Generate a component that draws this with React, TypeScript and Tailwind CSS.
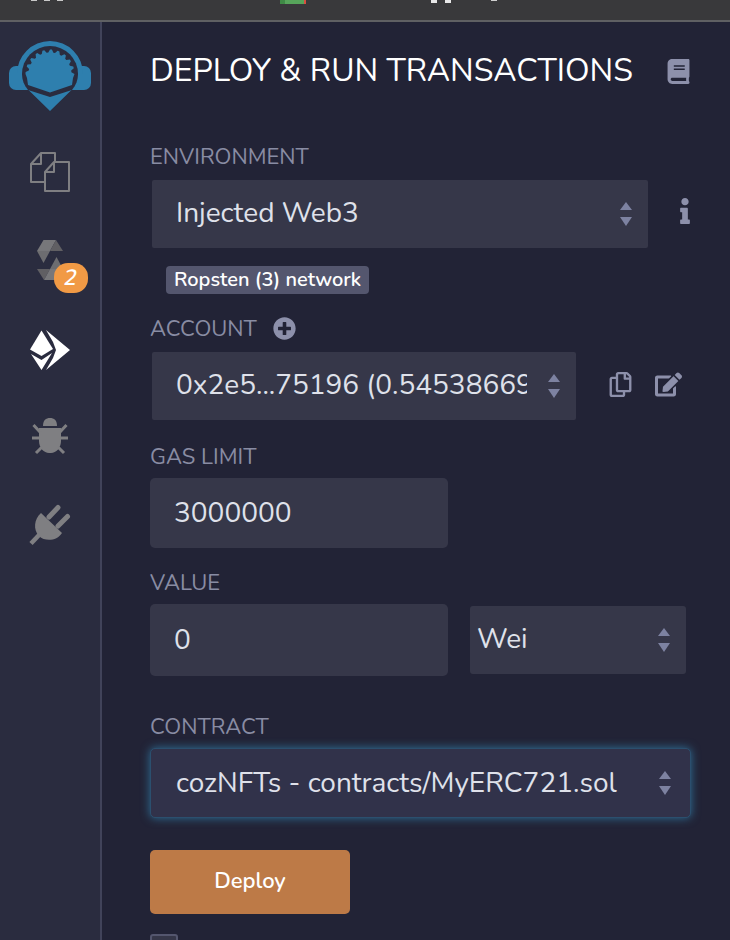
// Remix "Deploy & Run" side panel
import { FaBook, FaEdit, FaInfo, FaPlusCircle, FaRegCopy } from 'react-icons/fa';

const gearPoints = Array.from({ length: 41 }, (_, i) => {
  const a = Math.PI + (i / 40) * Math.PI;
  const r = i % 4 < 2 ? 24.5 : 21.5;
  return `${(50 + r * Math.cos(a)).toFixed(1)},${(74 + r * Math.sin(a)).toFixed(1)}`;
}).join(' ');

function Logo() {
  return (
    <svg width="100" height="80" viewBox="0 36 100 80">
      <rect x="9" y="66" width="20" height="24" rx="7" fill="#2e7fae" />
      <rect x="71" y="66" width="20" height="24" rx="7" fill="#2e7fae" />
      <path d="M17 74A33 33 0 0 1 83 74V90H71.500L50 111L28.500 90H17Z" fill="#2e7fae" />
      <path d="M22 74A28 28 0 0 1 78 74C78 80 76 85 72 90L50 97L28 90C24 85 22 80 22 74Z" fill="#2a2c3f" />
      <polygon points={`${gearPoints} 73,78 72,85 50,92.500 28,85 27,78`} fill="#2e7fae" />
    </svg>
  );
}

function FilesIcon() {
  return (
    <svg width="40" height="40" viewBox="30 152 40 40" fill="none" stroke="#7f7f82" strokeWidth="2" strokeLinejoin="round">
      <path d="M45 182H31V164L41 153H55V162" />
      <path d="M41 153V164H31" />
      <path d="M45 172L54 162H69V191H45Z" />
      <path d="M54 162V172H45" />
    </svg>
  );
}

function SolidityIcon() {
  return (
    <svg width="28" height="40" viewBox="36 240 28 40">
      <polygon points="43.500,240 56,240 50,251 37,251" fill="#77777a" />
      <polygon points="56,240 63,251 50,251" fill="#605f63" />
      <polygon points="37,251 50,251 43.500,263" fill="#6d6d70" />
      <polygon points="56.500,257 63,269 50,269" fill="#6d6d70" />
      <polygon points="37,269 50,269 44,280" fill="#605f63" />
      <polygon points="50,269 63,269 56.500,280 44,280" fill="#77777a" />
    </svg>
  );
}

function EthIcon() {
  return (
    <svg width="40" height="40" viewBox="32 330 40 40" fill="#ffffff">
      <polygon points="43.500,330.500 32,349.500 43.500,356 55,349" />
      <polygon points="33,354 43.500,360 54,353 43.500,370" />
      <polygon points="48,330 72,350 48,370 55,358 58,350 55,342" />
    </svg>
  );
}

function BugIcon() {
  return (
    <svg width="38" height="38" viewBox="31 416 38 38" fill="#7f7f82" stroke="none">
      <path d="M43 425C43 419 46 417 50 417C54 417 57 419 57 425Z" />
      <path d="M39 427H61V429.500H51V452H49V429.500H39Z" />
      <path d="M39 429H49V452C44 452 39 447 39 440Z" />
      <path d="M51 429H61V440C61 447 56 452 51 452Z" />
      <path d="M33.500 424L40 431M66.500 424L60 431M32 437H40M68 437H60M36 452L41.500 446.500M64 452L58.500 446.500" stroke="#7f7f82" strokeWidth="3" fill="none" />
    </svg>
  );
}

function PlugIcon() {
  return (
    <svg width="42" height="42" viewBox="30 503 42 42" fill="#7f7f82">
      <path d="M42 512L63 532C58 540 46 541 40 535C34 529 35 518 42 512Z" />
      <path d="M50 516L59 506.500M59 525L68.500 515.500" stroke="#7f7f82" strokeWidth="5" strokeLinecap="round" fill="none" />
      <path d="M41 533L32 542.500" stroke="#7f7f82" strokeWidth="4.500" fill="none" />
    </svg>
  );
}

function Arrows() {
  return (
    <svg width="12" height="24" viewBox="0 0 12 24" fill="#7d82a1" className="shrink-0">
      <polygon points="6,0 12,8 0,8" />
      <polygon points="0,15 12,15 6,24" />
    </svg>
  );
}

function Label({ children, className = '' }: { children: React.ReactNode; className?: string }) {
  return <div className={`text-[22px] leading-[24px] text-[#898ca3] ${className}`}>{children}</div>;
}

export default function App() {
  return (
    <div className="flex h-[940px] w-[730px] flex-col overflow-hidden bg-[#222336] font-['Nunito','Lato',sans-serif]">
      {/* browser chrome, cut off at the top */}
      <div className="flex h-[22px] shrink-0 items-start border-b-2 border-[#5f6063] bg-[#39393b]">
        <div className="ml-[31px] flex gap-[7px]">
          <div className="h-[1px] w-[6px] bg-[#c8c8c8]" />
          <div className="h-[1px] w-[6px] bg-[#c8c8c8]" />
          <div className="h-[1px] w-[6px] bg-[#c8c8c8]" />
        </div>
        <div className="ml-[217px] flex h-[4px] w-[26px]">
          <div className="w-[5px] bg-[#3f8a46]" />
          <div className="w-[19px] bg-[#57a55b]" />
          <div className="w-[2px] bg-[#d9503f]" />
        </div>
        <div className="ml-[125px] flex h-[3px] w-[20px] justify-between">
          <div className="w-[6px] bg-[#e8e8e8]" />
          <div className="w-[6px] bg-[#e8e8e8]" />
        </div>
        <div className="ml-[40px] h-[1px] w-[6px] bg-[#d0d0d0]" />
      </div>

      <div className="flex min-h-0 flex-1">
        {/* icon rail */}
        <div className="flex w-[102px] shrink-0 flex-col items-center border-r-2 border-[#41435a] bg-[#2a2c3f]">
          <div className="mt-[14px]">
            <Logo />
          </div>
          <div className="mt-[36px]">
            <FilesIcon />
          </div>
          <div className="relative mt-[48px]">
            <SolidityIcon />
            <span className="absolute top-[23px] left-[18px] flex h-[30px] w-[34px] items-center justify-center rounded-[14px] bg-[#f19a45] text-[22px] font-semibold text-white">
              <span className="inline-block -skew-x-12">2</span>
            </span>
          </div>
          <div className="mt-[50px]">
            <EthIcon />
          </div>
          <div className="mt-[47px]">
            <BugIcon />
          </div>
          <div className="mt-[49px]">
            <PlugIcon />
          </div>
        </div>

        {/* panel */}
        <div className="min-w-0 flex-1 pl-[48px]">
          <div className="mt-[27px] flex h-[44px] items-center">
            <h1 className="text-[32px] leading-[44px] font-normal whitespace-nowrap text-white">DEPLOY &amp; RUN TRANSACTIONS</h1>
            <FaBook className="ml-[33px] text-[#8d90ab]" size={25} />
          </div>

          <Label className="mt-[52px]">ENVIRONMENT</Label>
          <div className="mt-[11px] flex items-center">
            <div className="ml-[2px] flex h-[68px] w-[496px] items-center justify-between rounded-[2px] bg-[#363749] pr-[16px] pl-[24px]">
              <span className="mt-[-3px] text-[28px] text-[#dfe1ea]">Injected Web3</span>
              <Arrows />
            </div>
            <FaInfo className="mt-[-6px] ml-[24px] text-[#8d90ab]" size={26} />
          </div>
          <span className="mt-[18px] ml-[16px] inline-block h-[28px] rounded-[4px] bg-[#54566e] px-[8px] text-[20px] leading-[27px] font-semibold text-white">
            Ropsten (3) network
          </span>

          <div className="mt-[23px] flex h-[24px] items-center">
            <Label>ACCOUNT</Label>
            <FaPlusCircle className="mt-[-2px] ml-[16px] text-[#8d90ab]" size={23} />
          </div>
          <div className="mt-[11px] flex items-center">
            <div className="ml-[2px] flex h-[68px] w-[424px] items-center rounded-[2px] bg-[#363749] pr-[16px] pl-[24px]">
              <span className="mt-[-3px] w-[351px] overflow-hidden text-[28px] whitespace-nowrap text-[#dfe1ea]">0x2e5...75196 (0.54538669</span>
              <span className="ml-auto">
                <Arrows />
              </span>
            </div>
            <FaRegCopy className="mt-[-4px] ml-[32px] text-[#8d90ab]" size={25} />
            <FaEdit className="mt-[-4px] ml-[22px] text-[#8d90ab]" size={27} />
          </div>

          <Label className="mt-[25px]">GAS LIMIT</Label>
          <div className="mt-[9px] flex h-[70px] w-[298px] items-center rounded-[5px] bg-[#363749] pl-[24px] text-[28px] text-[#dfe1ea]">3000000</div>

          <Label className="mt-[23px]">VALUE</Label>
          <div className="mt-[9px] flex items-center">
            <div className="flex h-[72px] w-[298px] items-center rounded-[5px] bg-[#363749] pl-[24px] text-[28px] text-[#dfe1ea]">0</div>
            <div className="ml-[22px] flex h-[68px] w-[216px] items-center justify-between rounded-[3px] bg-[#363749] pr-[16px] pl-[8px] text-[28px] text-[#dfe1ea]">
              <span className="mt-[-3px] ml-[-1px]">Wei</span>
              <Arrows />
            </div>
          </div>

          <Label className="mt-[39px]">CONTRACT</Label>
          <div className="mt-[9px] flex h-[70px] w-[541px] items-center justify-between rounded-[5px] border border-[#2b4f6e] bg-[#31324a] pr-[19px] pl-[25px] shadow-[0_0_10px_#2f6f96]">
            <span className="text-[28px] whitespace-nowrap text-[#dfe1ea]">cozNFTs - contracts/MyERC721.sol</span>
            <Arrows />
          </div>

          <button className="mt-[32px] block h-[64px] w-[200px] rounded-[5px] bg-[#bd7a47] pb-[2px] text-[22px] font-semibold text-white">Deploy</button>
          <div className="mt-[20px] h-[30px] w-[28px] rounded-[3px] border-2 border-[#54566e] bg-[#363749]" />
        </div>
      </div>
    </div>
  );
}
